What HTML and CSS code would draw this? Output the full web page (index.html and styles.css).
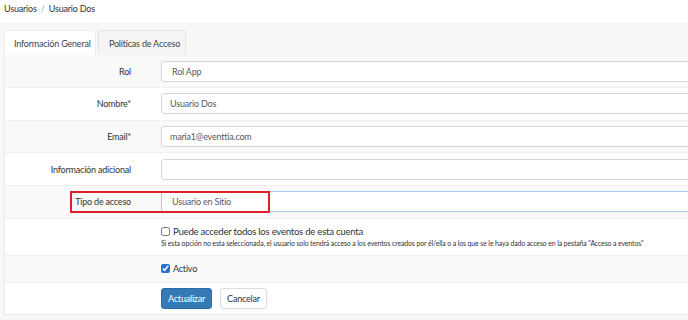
FILE: index.html
```html
<!DOCTYPE html>
<html lang="es">
<head>
  <meta charset="UTF-8">
  <title>Usuario Dos</title>
  <link rel="stylesheet" href="styles.css">
</head>
<body>
  <div class="breadcrumb">
    <a href="#">Usuarios</a>
    <span class="sep">/</span>
    <span>Usuario Dos</span>
  </div>

  <div class="page">
    <ul class="tabs">
      <li class="tab active">Información General</li>
      <li class="tab">Políticas de Acceso</li>
    </ul>

    <form class="panel">
      <div class="row shade">
        <label class="row-label">Rol</label>
        <div class="row-field"><input class="input role" value="Rol App" readonly></div>
      </div>
      <div class="row">
        <label class="row-label">Nombre*</label>
        <div class="row-field"><input class="input" value="Usuario Dos"></div>
      </div>
      <div class="row shade">
        <label class="row-label">Email*</label>
        <div class="row-field"><input class="input" value="maria1@eventtia.com"></div>
      </div>
      <div class="row">
        <label class="row-label">Información adicional</label>
        <div class="row-field"><input class="input" value=""></div>
      </div>
      <div class="row shade">
        <label class="row-label">Tipo de acceso</label>
        <div class="row-field"><input class="input focused" value="Usuario en Sitio"></div>
        <div class="callout"></div>
      </div>
      <div class="row check-row">
        <div class="row-label"></div>
        <div class="row-field">
          <label class="check big"><input type="checkbox"> Puede acceder todos los eventos de esta cuenta</label>
          <p class="help">Si esta opción no esta seleccionada, el usuario solo tendrá acceso a los eventos creados por él/ella o a los que se le haya dado acceso en la pestaña "Acceso a eventos"</p>
        </div>
      </div>
      <div class="row shade active-row">
        <div class="row-label"></div>
        <div class="row-field">
          <label class="check"><input type="checkbox" checked> Activo</label>
        </div>
      </div>
      <div class="row actions">
        <div class="row-label"></div>
        <div class="row-field buttons">
          <button type="button" class="btn btn-primary">Actualizar</button>
          <button type="button" class="btn btn-default">Cancelar</button>
        </div>
      </div>
    </form>
  </div>
</body>
</html>
```

FILE: styles.css
```css
* {
  margin: 0;
  padding: 0;
  box-sizing: border-box;
}

body {
  width: 688px;
  height: 320px;
  overflow: hidden;
  font-family: Lato, 'Open Sans', sans-serif;
  font-size: 9px;
  letter-spacing: -0.2px;
  color: #333;
  background: #f7f7f8;
}

.breadcrumb {
  height: 23px;
  padding: 3px 4px 0;
  background: #fff;
  color: #333;
}

.breadcrumb a {
  color: #333;
  text-decoration: none;
}

.breadcrumb .sep {
  color: #aaa;
  margin: 0 2px;
}

.page {
  width: 760px;
  padding: 7px 0 0 4px;
}

.tabs {
  list-style: none;
  display: flex;
  gap: 2px;
  height: 25px;
}

.tab {
  padding: 7px 9px 0;
  border: 1px solid #e4e4e4;
  border-bottom: none;
  border-radius: 3px 3px 0 0;
  background: #f5f5f5;
  color: #444;
  white-space: nowrap;
}

.tab.active {
  background: #fff;
  border-color: #eee;
  width: 92px;
}

.tab:last-child {
  width: 88px;
  padding-left: 10px;
}

.panel {
  background: #fff;
  border-left: 1px solid #ececec;
  box-shadow: 0 1px 1px rgba(0, 0, 0, 0.05);
}

.row {
  display: grid;
  grid-template-columns: 126px 1fr;
  column-gap: 30px;
  align-items: center;
  height: 32.7px;
  border-top: 1px solid #f0f0f0;
  position: relative;
}

.row:first-child {
  border-top: none;
  height: 32px;
}

.row.shade {
  background: #f9f9f9;
}

.row-label {
  text-align: right;
  color: #333;
}

.input {
  display: block;
  width: 100%;
  height: 21px;
  padding: 0 8px;
  border: 1px solid #d6d6d6;
  border-radius: 3px;
  background: #fff;
  font-family: inherit;
  font-size: 9px;
  letter-spacing: -0.2px;
  color: #5a5a5a;
  outline: none;
}

.input.role {
  padding-left: 10px;
}

.input.focused {
  border-color: #a6cdef;
  padding-left: 10px;
}

.callout {
  position: absolute;
  left: 65px;
  top: 5px;
  width: 200px;
  height: 22px;
  border: 2px solid #e0202a;
}

.check-row {
  height: 37px;
  align-items: start;
  padding-top: 7px;
}

.check {
  display: flex;
  align-items: center;
  gap: 3px;
  color: #333;
}

.check.big {
  font-size: 9.6px;
  letter-spacing: -0.25px;
}

.check input {
  width: 9px;
  height: 9px;
  margin: 0;
  accent-color: #2a6fd6;
}

.help {
  margin-top: 2px;
  font-size: 6.9px;
  letter-spacing: -0.1px;
  color: #333;
  white-space: nowrap;
}

.active-row {
  height: 27px;
}

.actions {
  height: 32px;
}

.buttons {
  display: flex;
  gap: 8px;
}

.btn {
  height: 21px;
  padding: 0 6px;
  border-radius: 3px;
  font-family: inherit;
  font-size: 9px;
  letter-spacing: -0.2px;
  cursor: pointer;
}

.btn-primary {
  background: #337ab7;
  border: 1px solid #2e6da4;
  color: #fff;
}

.btn-default {
  background: #fff;
  border: 1px solid #ddd;
  color: #333;
}
```
